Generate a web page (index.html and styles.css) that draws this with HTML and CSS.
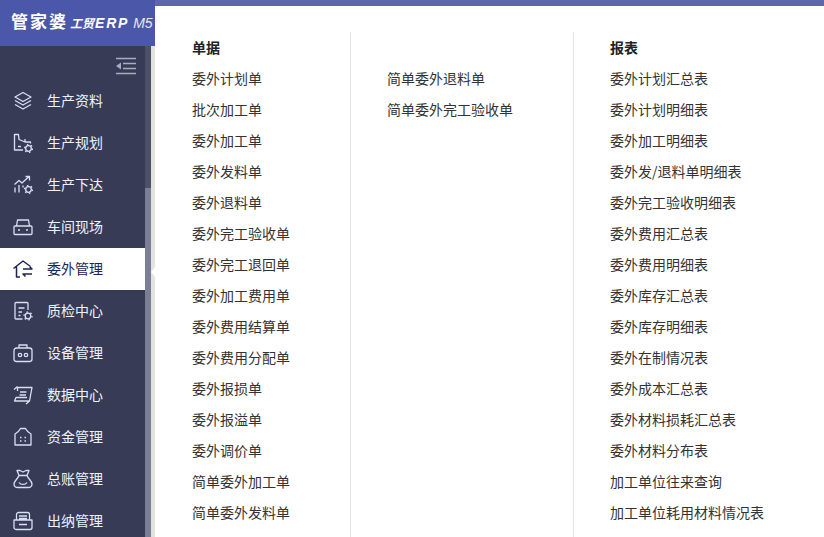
FILE: index.html
```html
<!DOCTYPE html>
<html lang="zh-CN">
<head>
<meta charset="utf-8">
<title>管家婆工贸ERP M5</title>
<link rel="stylesheet" href="styles.css">
</head>
<body>
<div class="app">
  <aside class="side">
    <div class="nav-col">
      <div class="logo">
        <span class="logo-main">管家婆</span><span class="logo-sub">工贸</span><span class="logo-erp">ERP</span><span class="logo-ver">M5</span>
      </div>
      <div class="collapse">
        <svg class="collapse-icon" width="20" height="18" viewBox="0 0 20 18"><path d="M0 1.500h20M7 6.500h13M7 11.500h13M0 16.500h20"/><path class="arrow" d="M5 5.500v7L0 9z"/></svg>
      </div>
      <nav class="nav">
        <a class="nav-item"><svg class="ico" viewBox="0 0 20 20"><path d="M10 1.500l8 4.500-8 4.500L2 6zM2 9.500l8 4.500 8-4.500M2 13.500l8 4.500 8-4.500"/></svg><span>生产资料</span></a>
        <a class="nav-item"><svg class="ico" viewBox="0 0 20 20"><path d="M10 17H1.500V1.500h4l.5 5 6 2.500h5.500v1.500M5 13.500h3M12 8.500V6"/><circle class="hub" cx="15.500" cy="15.500" r="2.800"/><circle class="gear" cx="15.500" cy="15.500" r="4"/></svg><span>生产规划</span></a>
        <a class="nav-item"><svg class="ico" viewBox="0 0 20 20"><path d="M1.500 9.500l4.500-4 3 2.500 7-6.500M12.500 1.500h4v4M2 17.500v-5M6 17.500V10M10 10.500v2"/><circle class="hub" cx="15.500" cy="14.500" r="2.800"/><circle class="gear" cx="15.500" cy="14.500" r="4"/></svg><span>生产下达</span></a>
        <a class="nav-item"><svg class="ico" viewBox="0 0 20 20"><path d="M3.500 9l1-6h11l1 6M2 9h16a1 1 0 0 1 1 1v6.500a1 1 0 0 1-1 1H2a1 1 0 0 1-1-1V10a1 1 0 0 1 1-1zM5 13h2M13 13h2"/></svg><span>车间现场</span></a>
        <a class="nav-item active"><svg class="ico" viewBox="0 0 20 20"><path d="M.5 9.500L10 2l7.500 5.500M3.500 7.500V18h3.500M10 10h9l-2.500-2.500M19 15h-9l2.500 2.500"/></svg><span>委外管理</span></a>
        <a class="nav-item"><svg class="ico" viewBox="0 0 20 20"><path d="M9.500 18H3a1 1 0 0 1-1-1V2.500a1 1 0 0 1 1-1h11a1 1 0 0 1 1 1V9M5.500 7h6M5.500 11h3.500M5.500 14.500h2"/><circle class="hub" cx="15" cy="15" r="2.800"/><circle class="gear" cx="15" cy="15" r="4"/></svg><span>质检中心</span></a>
        <a class="nav-item"><svg class="ico" viewBox="0 0 20 20"><path d="M3.500 5h13a2.500 2.500 0 0 1 2.500 2.500V16a2.500 2.500 0 0 1-2.500 2.500h-13A2.500 2.500 0 0 1 1 16V7.500A2.500 2.500 0 0 1 3.500 5zM6 5V2h8v3"/><circle cx="7" cy="12" r="1.700"/><circle cx="13" cy="12" r="1.700"/></svg><span>设备管理</span></a>
        <a class="nav-item"><svg class="ico" viewBox="0 0 20 20"><path d="M4.500 6V2.500H19L16.500 16H1.500l1.500-3.500h11M1 4.500L4.500 1.500M7 7h6.500M6.500 10h6.500M13 19l3.500-3"/></svg><span>数据中心</span></a>
        <a class="nav-item"><svg class="ico" viewBox="0 0 20 20"><path d="M2 18V7c2-1 4-2.500 5.500-5.500h5C14 4.500 16 6 18 7v11zM7 10.500h1.500M11.500 10.500H13M7 14h1.500M11.500 14H13"/></svg><span>资金管理</span></a>
        <a class="nav-item"><svg class="ico" viewBox="0 0 20 20"><path d="M6 6.500L4 1.500h3L10 3l3-1.500h3l-2 5zM6 6.500C5 9.500 1 12 1 15c0 2.500 2 3.500 4 3.500h10c2 0 4-1 4-3.500 0-3-4-5.500-5-8.500M6 13.500c1.500 2.500 6.500 2.500 8 0"/></svg><span>总账管理</span></a>
        <a class="nav-item"><svg class="ico" viewBox="0 0 20 20"><path d="M3.500 9V3.500A2 2 0 0 1 5.500 1.500h9a2 2 0 0 1 2 2V9M6 5h8M6 7.500h8M1 9h18v7.500a2 2 0 0 1-2 2H3a2 2 0 0 1-2-2zM6 13.500h8"/></svg><span>出纳管理</span></a>
      </nav>
    </div>
    <div class="scrollbar"><div class="thumb"></div></div>
    <div class="gutter"><i class="notch"></i></div>
  </aside>
  <main class="main">
    <div class="strip"></div>
    <div class="panel">
      <section class="col col-a">
        <h3 class="col-title">单据</h3>
        <a>委外计划单</a><a>批次加工单</a><a>委外加工单</a><a>委外发料单</a><a>委外退料单</a><a>委外完工验收单</a><a>委外完工退回单</a><a>委外加工费用单</a><a>委外费用结算单</a><a>委外费用分配单</a><a>委外报损单</a><a>委外报溢单</a><a>委外调价单</a><a>简单委外加工单</a><a>简单委外发料单</a>
      </section>
      <section class="col col-b">
        <h3 class="col-title">&nbsp;</h3>
        <a>简单委外退料单</a><a>简单委外完工验收单</a>
      </section>
      <section class="col col-c">
        <h3 class="col-title">报表</h3>
        <a>委外计划汇总表</a><a>委外计划明细表</a><a>委外加工明细表</a><a>委外发/退料单明细表</a><a>委外完工验收明细表</a><a>委外费用汇总表</a><a>委外费用明细表</a><a>委外库存汇总表</a><a>委外库存明细表</a><a>委外在制情况表</a><a>委外成本汇总表</a><a>委外材料损耗汇总表</a><a>委外材料分布表</a><a>加工单位往来查询</a><a>加工单位耗用材料情况表</a>
      </section>
    </div>
  </main>
</div>
</body>
</html>
```
FILE: styles.css
```css
* { box-sizing: border-box; }
html, body { margin: 0; height: 100%; overflow: hidden; }
body { font-family: "Noto Sans CJK SC", "Liberation Sans", sans-serif; font-size: 14px; background: #fff; }

.app { display: flex; width: 824px; height: 537px; overflow: hidden; }

.side { display: flex; flex: 0 0 155px; height: 537px; position: relative; background: #373b56; }
.nav-col { flex: 0 0 145px; width: 145px; }

.logo { display: flex; align-items: baseline; width: 155px; height: 46px; padding: 9px 0 0 11px; background: #4b57a9; color: #fff; white-space: nowrap; position: relative; z-index: 1; }
.logo-main { font-size: 17px; font-weight: 700; letter-spacing: 2px; line-height: 24px; }
.logo-sub { margin-left: 2px; font-size: 12px; font-weight: 700; font-style: italic; line-height: 24px; }
.logo-erp { margin-left: 1px; font-size: 14px; font-weight: 700; font-style: italic; line-height: 24px; letter-spacing: 1.800px; font-family: "Liberation Sans", sans-serif; }
.logo-ver { margin-left: 4px; font-size: 14px; font-style: italic; line-height: 24px; color: #e6e8f5; font-family: "Liberation Sans", sans-serif; }

.collapse { display: flex; justify-content: flex-end; align-items: center; height: 34px; padding: 6px 9px 0 0; }
.collapse-icon { fill: none; stroke: #a9acbc; stroke-width: 1.300; }
.collapse-icon .arrow { fill: #a9acbc; stroke: none; }

.nav { display: flex; flex-direction: column; }
.nav-item { display: flex; align-items: center; flex: 0 0 42px; height: 42px; padding-left: 13px; color: #eef2ff; }
.nav-item span { margin: 0 0 2px 14px; }
.nav-item.active { background: #fff; color: #1c2358; }
.ico { width: 20px; height: 20px; flex: none; fill: none; stroke: #d7e0f2; stroke-width: 1.300; stroke-linejoin: round; }
.ico .hub { stroke-width: 1.300; fill: #373b56; }
.ico .gear { stroke-width: 1.300; stroke-dasharray: 1.500 2.690; fill: none; }
.nav-item.active .ico { stroke: #1c2358; stroke-width: 1.500; }

.scrollbar { flex: 0 0 6px; height: 537px; margin-top: 46px; background: #4d5068; }
.thumb { height: 100%; margin-top: 142px; background: #7b7e95; }

.gutter { flex: 0 0 4px; height: 491px; margin-top: 46px; background: #e2e2e0; position: relative; }
.notch { position: absolute; right: 0; top: 221px; border: 5px solid transparent; border-left-width: 0; border-right: 4px solid #fff; }

.main { flex: 1; display: flex; flex-direction: column; min-width: 0; }
.strip { flex: 0 0 6px; background: #5c67ad; }
.panel { flex: 1; display: flex; align-items: stretch; padding-top: 26px; background: #fff; }

.col { display: flex; flex-direction: column; padding-left: 36px; border-right: 1px solid #e4e4f0; }
.col-a { flex: 0 0 196px; padding-left: 37px; }
.col-b { flex: 0 0 223px; }
.col-c { flex: 1; border-right: 0; }

.col-title { margin: 0; height: 31px; font-size: 14px; font-weight: 700; line-height: 31px; color: #222; }
.col a { height: 31px; line-height: 31px; color: #333; white-space: nowrap; }
```
